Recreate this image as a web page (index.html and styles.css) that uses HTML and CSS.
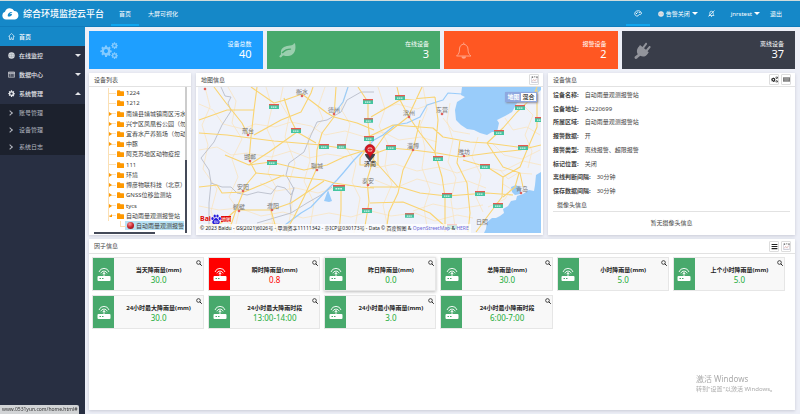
FILE: index.html
```html
<!DOCTYPE html>
<html lang="zh-CN">
<head>
<meta charset="utf-8">
<title>综合环境监控云平台</title>
<link rel="stylesheet" href="styles.css">
</head>
<body>
<svg class="sprite" aria-hidden="true">
  <symbol id="gear" viewBox="0 0 20 20"><path fill-rule="evenodd" d="M8.4 1h3.2l.4 2.4 1.7.7 2-1.4 2.2 2.2-1.4 2 .7 1.7 2.3.4v3l-2.3.5-.7 1.700 1.400 2-2.200 2.200-2-1.400-1.700.7-.4 2.400H8.400L8 16.700l-1.700-.7-2 1.400-2.200-2.200 1.400-2-.7-1.700L.5 12V9l2.300-.4.700-1.700-1.400-2 2.200-2.200 2 1.400L8 3.400zM10 6.800a3.400 3.400 0 1 0 0 6.800 3.400 3.400 0 0 0 0-6.800z"/></symbol>
  <symbol id="gears" viewBox="0 0 36 34"><use href="#gear" x="0" y="6" width="24" height="24"/><use href="#gear" x="22" y="0" width="14" height="14"/><use href="#gear" x="22" y="20" width="14" height="14"/></symbol>
  <symbol id="folder" viewBox="0 0 14 12"><path d="M0 1.500Q0 .5 1 .5h4.500l1.500 2h6q1 0 1 1V11q0 1-1 1H1q-1 0-1-1z"/></symbol>
  <symbol id="router" viewBox="0 0 28 28"><path d="M3 18h22q2 0 2 2v6q0 2-2 2H3q-2 0-2-2v-6q0-2 2-2z"/><path d="M14 18V10M4 10a10.500 10.500 0 0 1 20 0M7.500 12.500a7 7 0 0 1 13 0M10.500 14.500a4 4 0 0 1 7 0" fill="none" stroke="currentColor" stroke-width="1.800"/><path class="led" d="M5 22h3v2H5zM10 22h3v2h-3z"/></symbol>
  <symbol id="search" viewBox="0 0 12 12"><circle cx="5" cy="5" r="3.700" fill="none" stroke="currentColor" stroke-width="1.600"/><path d="M7.500 7.500l4 4" stroke="currentColor" stroke-width="2"/></symbol>
  <symbol id="chart" viewBox="0 0 16 16"><path d="M1 1v14h14V1" fill="none" stroke="#aab" stroke-width="1"/><path d="M2 1h3v3H2zM7 1h3v2H7zM12 1h3v3h-3z" fill="#555"/><path d="M3 12l3-4 3 3 4-5" fill="none" stroke="#c99" stroke-width="1.500"/><path d="M3 14h10" stroke="#99b" stroke-width="1" stroke-dasharray="2 1"/></symbol>
  <symbol id="globe" viewBox="0 0 12 12"><circle cx="6" cy="6" r="5.500"/><path d="M1 4.500h10M1 7.500h10M6 1v10M4 1q-2 5 0 10M8 1q2 5 0 10" fill="none" stroke="#456" stroke-width=".6" opacity=".6"/></symbol>
  <symbol id="shield" viewBox="0 0 10 5"><path fill="#45c5a0" d="M0 0h10v5H0z"/><path fill="#e8594f" d="M0 0h10v1.300H0z"/><path d="M2 3.200h6" stroke="#fff" stroke-width="1.200" stroke-dasharray="1.500 .5" opacity=".75"/></symbol>
</svg>

<header class="topbar">
  <div class="brand">
    <svg class="brand-logo" viewBox="0 0 34 24"><path fill="#fff" d="M8 23a8 8 0 0 1-2-15.500A10 10 0 0 1 24.500 6 8.600 8.600 0 0 1 26 23z"/><path fill="#1588c8" d="M12 17c-2-5 3-10 9-9-1 1-5 2-6 5 2-2 5-2 5 0s-4 5-8 4z"/></svg>
    <h1>综合环境监控云平台</h1>
  </div>
  <nav class="topnav">
    <a class="active" href="#">首页</a>
    <a href="#">大屏可视化</a>
  </nav>
  <div class="tools">
    <button class="theme" aria-label="主题"><svg viewBox="0 0 16 14"><path fill="none" stroke="currentColor" stroke-width="1.600" d="M8 12C3 13 1 9 1.500 6.500 2 3 6 1 9.500 1.500c4 .5 6 4 5 6.500-1 2-3 .5-4.500 1S9.500 11.500 8 12z"/><path d="M4 6h2v2H4zM6.500 3.500h2v2h-2zM10.500 4h2v2h-2z"/></svg></button>
    <button class="alarm"><svg viewBox="0 0 12 12"><use href="#globe"/></svg>告警关闭<i class="caret"></i></button>
    <button class="mute" aria-label="静音"><svg viewBox="0 0 14 14"><path fill="none" stroke="currentColor" stroke-width="1.400" d="M2 11h10c-1.500-1.500-1.500-3-1.500-5a3.500 3.500 0 0 0-7 0c0 2 0 3.500-1.500 5zM13 1L1 13M6 13h2"/></svg></button>
    <button class="user">jnrstest<i class="caret"></i></button>
    <a href="#">退出</a>
  </div>
</header>

<div class="shell">
  <nav class="sidebar">
    <a class="item current" href="#"><svg viewBox="0 0 14 14"><path fill="none" stroke="currentColor" stroke-width="1.200" d="M.7 7L7 1l6.300 6M3 6v7h3V9.500h2V13h3V6"/></svg>首页</a>
    <a class="item" href="#"><svg viewBox="0 0 12 12"><use href="#globe"/></svg>在线监控<i class="caret"></i></a>
    <a class="item" href="#"><svg viewBox="0 0 14 14"><path fill="none" stroke="currentColor" stroke-width="1.200" d="M1 2h12v10.500H1zM1 5h12M3 7.500h4M3 10h4M9 7.500h2.500M9 10h2.500M1 3.500h12"/></svg>数据中心<i class="caret"></i></a>
    <a class="item" href="#"><svg viewBox="0 0 20 20"><use href="#gear"/></svg>系统管理<i class="caret up"></i></a>
    <div class="submenu">
      <a href="#"><i class="chevron"></i>账号管理</a>
      <a href="#"><i class="chevron"></i>设备管理</a>
      <a href="#"><i class="chevron"></i>系统日志</a>
    </div>
  </nav>

  <main class="content">
    <section class="stats">
      <div class="stat blue"><svg viewBox="0 0 36 34"><use href="#gears"/></svg><p>设备总数<strong>40</strong></p></div>
      <div class="stat green"><svg viewBox="0 0 36 34"><path fill-rule="evenodd" d="M34 3c3 12-1 24-14 25-5 .500-8-1-10-1-2 1-3 4-5 4-2-.5-2.500-2.500-2-3 1-2 3-2 3-4C4 10 16 8 24 7c5 0 7-2 8-4.500zM8 22c1 1 2 .5 3-.5 4-4 8-6 14-6 2-.5 2-2.500 0-2.500-7 0-12 2-17 7-1 1-1 1.500 0 2z"/></svg><p>在线设备<strong>3</strong></p></div>
      <div class="stat orange"><svg viewBox="0 0 36 34"><path fill="none" stroke="currentColor" stroke-width="2" d="M3 28c5-4 6-8 6-14C9 8 13 4.500 17 4.500S26 8 26 14c0 6 1 10 6 14zM17.500 4V1"/><path d="M13 29h9c0 3-2 4.500-4.500 4.500S13 32 13 29z"/></svg><p>报警设备<strong>2</strong></p></div>
      <div class="stat dark"><svg viewBox="0 0 36 34"><path d="M12 9l2-3 5 4 6-8c1-1.500 4 .5 3 2.500l-6 8 4 3 6-7c1.500-1.500 4 .5 3 2.500l-6 7.500 2.500 2-2 3c-4 6-10 7-15 4l-5 4c-1 2-3 3-5 2s-2-4 0-5l5-4c-3-5-2-11 2.500-15.500z"/></svg><p>离线设备<strong>37</strong></p></div>
    </section>

    <section class="middle">
      <article class="panel">
        <header class="panel-head"><h2>设备列表</h2></header>
        <div class="tree">
          <ul>
            <li><svg><use href="#folder"/></svg>1224</li>
            <li><svg><use href="#folder"/></svg>1212</li>
            <li class="more"><svg><use href="#folder"/></svg>南靖县靖城镇南区污水</li>
            <li class="more"><svg><use href="#folder"/></svg>兴宁区凤凰谷公园（勿</li>
            <li class="more"><svg><use href="#folder"/></svg>宜春水产养殖场（勿动</li>
            <li class="more"><svg><use href="#folder"/></svg>中豚</li>
            <li><svg><use href="#folder"/></svg>阿克苏地区动物疫控</li>
            <li><svg><use href="#folder"/></svg>111</li>
            <li class="more"><svg><use href="#folder"/></svg>环境</li>
            <li class="more"><svg><use href="#folder"/></svg>博彦物联科技（北京）</li>
            <li class="more"><svg><use href="#folder"/></svg>GNSS位移监测站</li>
            <li class="more"><svg><use href="#folder"/></svg>tycs</li>
            <li class="open"><svg><use href="#folder"/></svg>自动雨量观测报警站</li>
            <li class="leaf"><span><b></b>自动雨量观测报警</span></li>
          </ul>
          <div class="vbar"></div>
          <div class="hbar"></div>
        </div>
      </article>

      <article class="panel">
        <header class="panel-head"><h2>地图信息</h2><button aria-label="图表"><svg viewBox="0 0 16 16"><use href="#chart"/></svg></button></header>
        <div class="map">
          <svg class="map-canvas" viewBox="198 87 343 146" preserveAspectRatio="xMidYMid slice">
            <path fill="#eff2fa" d="M198 87h343v146H198z"/>
            <g class="sea">
              <path d="M462 87l-1 8 4 2-8 5-2 8 1 10 5 5 6 4 7 1 6 3 7 2 5-3 5 0 2-9-2-3 8-4 7-4 5-9 8-2 7-3 9-8V87z"/>
              <path d="M541 172l-5 3-1 10-1 6-5-1-6 4-6 2-1 4-5 1-3 5-5 3 1 4-4 3-4 2-4 0-5 4-1 7-2 4h58z"/>
              <path d="M511 187l5-2 5 3-1 6-5 1-3-3zM328 190l4 11-3 1-5-1z"/>
            </g>
            <g class="minor">
              <path d="M199 104l14 6 10 14 20 5 12-5 20 3 16-5 20 4 14 9 20-4 20 6 18-5 16 8 22-3 16 5M205 87l5 20-8 18 6 20-5 24 14 20-6 22 8 22M228 87l8 14-4 22 10 16-10 20 6 18-9 20 10 14-5 22M199 150l18-3 14 8 16-2 24 4 20-6 18 7 18-4 20 3M199 206l20 4 20-2 22 8 22-4 20 6 26-5 22 4 20-6 20 5 24-3 20 8 22-6 16 3"/>
              <path d="M266 87l6 20-5 22 8 18-7 26 8 14-6 20 4 26M283 87l-3 15 9 15-4 20 10 26-6 20 3 22-5 28M325 87l-7 20 5 12-15 18 2 24-6 20 10 22-5 30M348 87l-7 22 9 15-5 22 11 18-4 18 8 16-6 35M378 87l7 22-6 17 9 18-3 22 7 18-9 21 6 28M423 87l4 22-7 17 5 22-3 20 8 22-6 18 4 25M450 103l-3 18 6 19-5 22 8 16-5 22 5 33M478 137l-6 20 9 18-5 22 7 15"/>
              <path d="M205 225l20-4 16 8 28-6 30 4M260 183l16 8 20-3 22 5 20-6M380 110l17-6 20 5 20-7M375 168l20-4 22 7 22-4 18 6 22-7 24 5 20-10 18 4M375 180l20 8 22-9 24 6 27-4 18 7M492 143l12 12 18 4 18-9M505 118l8 12 14-3 13 8M525 107l8 8-8 20 7 16-4 17M443 118l10 13 17 3M500 170l8 9 10-6 14 1M503 184l8 5-6 10-17 8M413 211l20-7 24 5 26-4"/>
            </g>
            <g class="border"><path d="M221 87l4 9 6 1-3 6 3 8-9 14-8 17-13 16 8 12 2 13 11 4 9 0 6 6 10 2 11-3 13 2 6-8 8 2 6 7 3-6-8-14 3-12 15-11 7-17 6-13 10-2 14-8 6-12 14-8h13M211 183l-2 20 0 28M294 187l-4 16 1 10 16-10 14-8 11-8M257 223l34-10"/></g>
            <g class="river"><path d="M285 225l16-12 10-6 16-17 10-10 7-8 10-12 7-7 13-13 9-5 12-10 12-2 13-6 7-12 16-5 5-7 14 1 5 3M348 87l-5 15-9 12"/></g>
            <g class="road">
              <path d="M214 87l12 16 16 20 6 12M257 87l-3 23-3 27-2 23 7 13-10 12-10 25-7 21M199 133l28 2 47 6 47 4 33 5 12 2M251 87l23 16 11-3 17-6 25 19 7 4 23 6 17 7M254 135l27-15 20-8 10-19 2-6M284 98l7 22 6 12 19 11M334 117l-12 16-5 17-1 20-12 27-10 20-8 14"/>
              <path d="M249 165l22-3 33 8 23-5 17-8 22-7M199 187l18-2 5 8 22-1 22-9 18-8M256 173l38 4 30 3 10 3 27 4 13 1M236 210l35 0 20-7 33-22M341 187v23l-2 22M374 157l-7 23 2 22-5 30M336 87l-2 30M358 87l10 15 0 20 3 30M199 120l28-10 27 0M225 155l24 10 20-13 28-20M236 210l-15 13-22 5M271 210l6 22"/>
              <path d="M397 87l3 13 9 17 11 16 15 19M368 137l25-12 40 3 10 9 27 5 17 1 16-15 14-16 16-15 4-10M371 155l19-7 23 2 24 3 23 4 30-4 30-3 21-5M435 97l3 23-3 33 7 24 3 20 0 35M420 120l-7 30-10 20-5 23-9 19-3 20M370 187l30 0 20 6 27 3 40-3 26 2M460 140l-3 23 10 20 3 30-2 19M487 143l16 24 17 6 3 14M463 160l24 7 16 10-1 20-15 20-11 15M537 90v37l-10 23-7 17-17 10M370 203l33-1 27 11 17 15M435 97l-35 3-29 17M371 155l14-20 23-18 14-30M398 187l-25-28M503 197l12-10 4-14M487 143l38 5"/>
              <path d="M360 158v7h18v-14h-13z"/>
            </g>
            <g>
              <use href="#shield" x="269" y="104" width="10" height="5"/><use href="#shield" x="291" y="128" width="10" height="5"/><use href="#shield" x="267" y="160" width="10" height="5"/><use href="#shield" x="319" y="144" width="10" height="5"/><use href="#shield" x="337" y="144" width="9" height="5"/><use href="#shield" x="363" y="99" width="10" height="5"/><use href="#shield" x="364" y="118" width="9" height="5"/><use href="#shield" x="364" y="136" width="10" height="5"/><use href="#shield" x="333" y="185" width="12" height="6"/><use href="#shield" x="362" y="208" width="10" height="5"/><use href="#shield" x="395" y="95" width="10" height="5"/><use href="#shield" x="386" y="145" width="10" height="5"/><use href="#shield" x="433" y="156" width="10" height="5"/><use href="#shield" x="480" y="164" width="10" height="5"/><use href="#shield" x="494" y="130" width="10" height="5"/><use href="#shield" x="515" y="105" width="10" height="5"/><use href="#shield" x="535" y="117" width="10" height="5"/><use href="#shield" x="518" y="145" width="10" height="5"/><use href="#shield" x="442" y="193" width="10" height="5"/><use href="#shield" x="475" y="191" width="10" height="5"/><use href="#shield" x="493" y="203" width="10" height="5"/><use href="#shield" x="405" y="213" width="9" height="5"/><use href="#shield" x="445" y="224" width="14" height="5"/>
            </g>
            <g class="dots">
              <circle cx="205" cy="89" r="1.300"/><circle cx="302" cy="96" r="1.300"/><circle cx="334" cy="114" r="1.300"/><circle cx="248" cy="135" r="1.300"/><circle cx="250" cy="161" r="1.300"/><circle cx="317" cy="170" r="1.300"/><circle cx="243" cy="191" r="1.300"/><circle cx="239" cy="211" r="1.300"/><circle cx="272" cy="210" r="1.300"/><circle cx="368" cy="185" r="1.300"/><circle cx="409" cy="117" r="1.300"/><circle cx="442" cy="114" r="1.300"/><circle cx="413" cy="150" r="1.300"/><circle cx="464" cy="156" r="1.300"/><circle cx="521" cy="193" r="1.300"/>
            </g>
            <g class="cities">
              <text x="302" y="94">衡水</text><text x="334" y="112">德州</text><text x="248" y="133">邢台</text><text x="250" y="159">邯郸</text><text x="317" y="168">聊城</text><text x="243" y="189">安阳</text><text x="239" y="209">鹤壁</text><text x="273" y="208">濮阳</text><text x="368" y="183">泰安</text><text x="409" y="115">滨州</text><text x="442" y="112">东营</text><text x="413" y="148">淄博</text><text x="464" y="154">潍坊</text><text x="522" y="191">青岛</text><text x="482" y="224">日照</text><text class="capital" x="370" y="166">济南</text>
            </g>
            <path fill="#3d4148" d="M370 162c-2-4-5-5-5-8h10c0 3-3 4-5 8z"/>
            <path fill="#d8141f" stroke="#8e1018" stroke-width=".5" d="M370 158c-1-4-5-5-5-8.500a5 5 0 0 1 10 0c0 3.500-4 4.500-5 8.500z"/>
            <circle cx="370" cy="149.500" r="2.500" fill="#e8a0a0"/><path d="M368 149.500h4M370 147.500v4" stroke="#c22" stroke-width=".8"/>
          </svg>
          <div class="map-type"><button class="on">地图</button><button>混合</button></div>
          <div class="baidu"><b>Bai</b><svg viewBox="0 0 20 20"><ellipse cx="3" cy="9" rx="2.300" ry="3"/><ellipse cx="7.500" cy="4" rx="2.300" ry="3.200"/><ellipse cx="13" cy="4" rx="2.300" ry="3.200"/><ellipse cx="17.500" cy="9" rx="2.300" ry="3"/><path d="M10 8c3 0 4 3 6 5 3 3 1 7-2 7-2 0-2-.5-4-.5S8 20 6 20c-3 0-5-4-2-7 2-2 3-5 6-5z"/><path d="M7 13.500v4h2.500v-4zM11.500 13v4.500H14V13" fill="none" stroke="#fff" stroke-width="1"/></svg><em>地图</em></div>
          <p class="copyright">© 2023 Baidu - GS(2021)6026号 - 甲测资字11111342 - 京ICP证030173号 - Data © 百度智图 &amp; <a href="#">OpenStreetMap</a> &amp; <a href="#">HERE</a></p>
        </div>
      </article>

      <article class="panel">
        <header class="panel-head"><h2>设备信息</h2><button aria-label="设置"><svg viewBox="0 0 36 34"><use href="#gears"/></svg></button><button aria-label="键盘"><svg viewBox="0 0 16 12"><path fill="#777" d="M0 1h16v10H0z"/><path d="M2 4h12M2 6.500h12M4 9h8" stroke="#ddd" stroke-width="1.200" stroke-dasharray="1.500 1"/></svg></button></header>
        <div class="info">
          <dl>
            <div><dt>设备名称:</dt><dd>自动雨量观测报警站</dd></div>
            <div><dt>设备地址:</dt><dd>24220699</dd></div>
            <div><dt>所属区域:</dt><dd>自动雨量观测报警站</dd></div>
            <div><dt>报警数据:</dt><dd>开</dd></div>
            <div><dt>报警类型:</dt><dd>离线报警、超限报警</dd></div>
            <div><dt>标记位置:</dt><dd>关闭</dd></div>
            <div><dt>离线判断间隔:</dt><dd>30分钟</dd></div>
            <div><dt>保存数据间隔:</dt><dd>30分钟</dd></div>
          </dl>
          <h3>摄像头信息</h3>
          <p>暂无摄像头信息</p>
        </div>
      </article>
    </section>

    <section class="panel factors">
      <header class="panel-head"><h2>因子信息</h2><button aria-label="列表"><svg viewBox="0 0 12 12"><path d="M1 1.500h10v2H1zM1 5h10v2H1zM1 8.500h10v2H1z"/></svg></button><button aria-label="图表"><svg viewBox="0 0 16 16"><use href="#chart"/></svg></button></header>
      <div class="cards">
        <div class="card"><span class="badge"><svg><use href="#router"/></svg></span><p>当天降雨量(mm)<strong>30.0</strong></p><button aria-label="查看"><svg><use href="#search"/></svg></button></div>
        <div class="card warn"><span class="badge"><svg><use href="#router"/></svg></span><p>瞬时降雨量(mm)<strong>0.8</strong></p><button aria-label="查看"><svg><use href="#search"/></svg></button></div>
        <div class="card hover"><span class="badge"><svg><use href="#router"/></svg></span><p>昨日降雨量(mm)<strong>0.0</strong></p><button aria-label="查看"><svg><use href="#search"/></svg></button></div>
        <div class="card"><span class="badge"><svg><use href="#router"/></svg></span><p>总降雨量(mm)<strong>30.0</strong></p><button aria-label="查看"><svg><use href="#search"/></svg></button></div>
        <div class="card"><span class="badge"><svg><use href="#router"/></svg></span><p>小时降雨量(mm)<strong>5.0</strong></p><button aria-label="查看"><svg><use href="#search"/></svg></button></div>
        <div class="card"><span class="badge"><svg><use href="#router"/></svg></span><p>上个小时降雨量(mm)<strong>5.0</strong></p><button aria-label="查看"><svg><use href="#search"/></svg></button></div>
        <div class="card"><span class="badge"><svg><use href="#router"/></svg></span><p>24小时最大降雨量(mm)<strong>30.0</strong></p><button aria-label="查看"><svg><use href="#search"/></svg></button></div>
        <div class="card"><span class="badge"><svg><use href="#router"/></svg></span><p>24小时最大降雨时段<strong>13:00-14:00</strong></p><button aria-label="查看"><svg><use href="#search"/></svg></button></div>
        <div class="card"><span class="badge"><svg><use href="#router"/></svg></span><p>24小时最小降雨量(mm)<strong>3.0</strong></p><button aria-label="查看"><svg><use href="#search"/></svg></button></div>
        <div class="card"><span class="badge"><svg><use href="#router"/></svg></span><p>24小时最小降雨时段<strong>6:00-7:00</strong></p><button aria-label="查看"><svg><use href="#search"/></svg></button></div>
      </div>
    </section>
  </main>
</div>

<aside class="watermark"><strong>激活 Windows</strong>转到"设置"以激活 Windows。</aside>
<div class="status">www.0531yun.com/home.html#</div>
</body>
</html>
```
FILE: styles.css
```css
* { box-sizing: border-box; margin: 0; padding: 0; }

body {
  display: flex;
  flex-direction: column;
  min-height: 100vh;
  background: #edeff7;
  color: #444;
  font: 6px/10px "Noto Sans", "Noto Sans CJK SC", sans-serif;
}

a { color: inherit; text-decoration: none; }
button { font: inherit; color: inherit; background: none; border: 0; }
svg { display: block; fill: currentColor; flex: none; }
ul { list-style: none; }
h1, h2, h3 { font-weight: 400; font-size: inherit; }
.sprite { position: absolute; width: 0; height: 0; }

.caret {
  border: 3px solid transparent;
  border-top-color: currentColor;
  border-bottom-width: 0;
}
.caret.up { border-bottom: 3px solid currentColor; border-top-width: 0; }

/* top bar */
.topbar {
  display: flex;
  height: 27px;
  border-top: 1px solid #cfdcdc;
  border-bottom: 1px solid #0f7cbc;
  background: #1588c8;
  color: #fff;
}
.brand { display: flex; align-items: center; gap: 4px; width: 111px; padding-left: 2px; }
.brand-logo { width: 17px; height: 12px; }
.brand h1 { font-size: 9px; font-weight: 500; white-space: nowrap; }
.topnav { display: flex; gap: 1px; }
.topnav a { display: flex; align-items: center; padding: 2px 8px 0; border-bottom: 2px solid transparent; }
.topnav a.active { border-color: #0ea5ee; }
.tools { display: flex; align-items: center; gap: 10px; margin-left: auto; padding-right: 18px; }
.tools button { display: flex; align-items: center; gap: 2px; }
.tools .theme { align-self: stretch; padding: 2px 8px 0; margin-right: -2px; border-bottom: 2px solid #0ea5ee; }
.tools .user { padding-left: 6px; }
.theme svg { width: 8px; height: 7px; }
.alarm svg { width: 6px; height: 6px; }
.mute svg { width: 7px; height: 7px; }

/* side menu */
.shell { display: flex; flex: 1; }
.sidebar { width: 85px; flex: none; background: #282f42; color: #e4e6ea; }
.item { display: flex; align-items: center; gap: 4px; height: 19px; padding: 0 4px 0 8px; font-weight: 500; }
.item svg { width: 7px; height: 7px; }
.item .caret { margin-left: auto; }
.item.current { background: #1588c8; color: #fff; }
.submenu { margin-top: 1px; background: #1c212d; color: #b4b8c0; }
.submenu a { display: flex; align-items: center; gap: 7px; height: 17px; padding-left: 8px; }
.chevron { width: 4px; height: 4px; border: solid currentColor; border-width: 1px 1px 0 0; transform: rotate(45deg); }

/* content */
.content { display: flex; flex-direction: column; flex: 1; gap: 4px; min-width: 0; padding: 4px 5px 4px 4px; }

.stats { display: grid; grid-template-columns: repeat(4, 1fr); gap: 4px; }
.stat { display: flex; align-items: center; height: 38px; padding: 0 11px; color: #fff; }
.stat svg { width: 18px; height: 17px; opacity: .45; }
.stat p { margin-left: auto; text-align: right; line-height: 8px; }
.stat strong { display: block; font-size: 11px; font-weight: 400; line-height: 12px; }
.blue { background: #1e9fff; }
.green { background: #48a96c; }
.orange { background: #ff5722; }
.dark { background: #393d49; }

.panel { display: flex; flex-direction: column; min-width: 0; background: #fff; box-shadow: 0 1px 3px #c8cad6; }
.panel-head { display: flex; align-items: center; gap: 2px; height: 14px; padding: 0 4px 0 5px; border-bottom: 1px solid #e2e2e2; }
.panel-head h2 { margin-right: auto; }
.panel-head button { display: grid; place-items: center; width: 10px; height: 11px; border: 1px solid #ddd; border-radius: 1px; color: #222; }
.panel-head svg { width: 7px; height: 7px; }

.middle { display: grid; grid-template-columns: 102px 347fr 247fr; gap: 5px; height: 162px; }

/* device tree */
.tree { position: relative; display: flex; flex: 1; min-height: 0; padding: 1px 5px 4px; overflow: hidden; }
.tree ul { display: flex; flex-direction: column; flex: 1; min-width: 0; padding-left: 14px; overflow: hidden; }
.tree li {
  position: relative;
  display: flex;
  flex: 1;
  align-items: center;
  gap: 2px;
  min-height: 0;
  padding-left: 8px;
  border-left: 1px solid #fbe0b5;
  white-space: nowrap;
}
.tree li svg { width: 7px; height: 6px; color: #ff9800; }
.tree li::before { content: ""; position: absolute; left: 0; width: 7px; border-top: 1px solid #fbe0b5; }
.tree .more::after { content: ""; position: absolute; left: 0; border: 2px solid transparent; border-left: 3px solid #ff9800; border-right: 0; }
.tree .open::after { content: ""; position: absolute; left: 0; border-left: 3px solid transparent; border-bottom: 3px solid #ff9800; }
.tree .leaf { border-color: transparent; padding-left: 16px; }
.tree .leaf::before { left: 11px; width: 5px; height: 5px; top: 0; border: solid #fbe0b5; border-width: 0 0 1px 1px; }
.tree .leaf span { display: flex; align-items: center; gap: 2px; height: 9px; padding-left: 2px; background: #b9e3f5; }
.tree .leaf b { width: 7px; height: 7px; border-radius: 50%; background: radial-gradient(circle at 40% 30%, #f99, #c8242c 50%, #7c1218); }
.vbar, .hbar { position: absolute; }
.vbar { top: 0; right: 4px; bottom: 2px; width: 2px; background: linear-gradient(#ccc 50%, #444a58 50%); }
.hbar { left: 5px; bottom: 1px; width: 60%; height: 2px; background: #444a58; }

/* map */
.map { position: relative; flex: 1; min-height: 0; margin: 0 2px 2px; overflow: hidden; }
.map-canvas { width: 100%; height: 100%; }
.sea { fill: #99ccfa; }
.minor, .border, .river, .road { fill: none; stroke-linejoin: round; }
.minor { stroke: #fbe3b8; stroke-width: .7; }
.border { stroke: #b9bdc9; stroke-width: .9; }
.river { stroke: #99ccfa; stroke-width: 1.2; }
.road { stroke: #fad471; stroke-width: 1.1; }
.dots { fill: #e0605c; }
.cities { font-size: 6px; text-anchor: middle; fill: #777; }
.capital { fill: #222; }
.map-type { position: absolute; top: 5px; right: 4px; display: flex; border: 1px solid #8ea8e0; box-shadow: 1px 1px 2px #889; }
.map-type button { width: 15px; height: 8px; line-height: 8px; background: #fff; color: #000; }
.map-type .on { background: #8ea8e0; color: #fff; font-weight: 700; }
.baidu { position: absolute; left: 2px; bottom: 9px; display: flex; align-items: center; height: 10px; color: #e10602; font-size: 7px; }
.baidu svg { width: 10px; height: 10px; color: #2319dc; }
.baidu em { background: #e10602; color: #fff; font-size: 5px; font-style: normal; line-height: 6px; }
.copyright {
  position: absolute;
  left: 0;
  bottom: 0;
  padding: 0 2px;
  background: rgba(255, 255, 255, .7);
  color: #222;
  font-size: 5px;
  line-height: 9px;
  white-space: nowrap;
}
.copyright a { color: #6a6ad8; }

/* device details */
.info { display: flex; flex-direction: column; flex: 1; padding: 1px 5px 7px; }
.info dl { display: flex; flex-direction: column; flex: 1; }
.info dl div { display: flex; flex: 1; align-items: center; gap: 6px; }
.info dt { font-weight: 700; }
.info h3 { height: 14px; padding: 2px 4px; border-bottom: 1px solid #e2e2e2; }
.info p { padding-top: 6px; text-align: center; }

/* factors */
.factors { flex: 1; }
.factors .panel-head { height: 15px; }
.cards { display: grid; grid-template-columns: repeat(6, 1fr); gap: 4px; padding: 3px 10px 3px 3px; }
.card { position: relative; display: flex; height: 34px; border: 1px solid #e6e6e6; background: #f8f8f8; color: #222; }
.card.hover { box-shadow: 0 1px 3px #bbb; }
.badge { display: grid; place-items: center; width: 21px; background: #48a96c; color: #fff; }
.badge svg { width: 14px; height: 14px; }
.led { fill: #48a96c; }
.warn .badge { background: #f00; }
.card p { flex: 1; padding-top: 7px; text-align: center; font-weight: 700; white-space: nowrap; }
.card strong { display: block; color: #22ac38; font-size: 8px; font-weight: 400; }
.warn strong { color: #f00; }
.card button { position: absolute; top: 2px; right: 1px; }
.card button svg { width: 6px; height: 6px; }

.watermark { position: fixed; right: 18px; bottom: 20px; width: 86px; color: #aaa; white-space: nowrap; }
.watermark strong { display: block; font-size: 8px; font-weight: 400; }
.status {
  position: fixed;
  left: 0;
  bottom: 0;
  padding: 0 2px;
  border-top-right-radius: 2px;
  background: #d2d4d6;
  color: #333;
  font-size: 5px;
  line-height: 9px;
}
```
